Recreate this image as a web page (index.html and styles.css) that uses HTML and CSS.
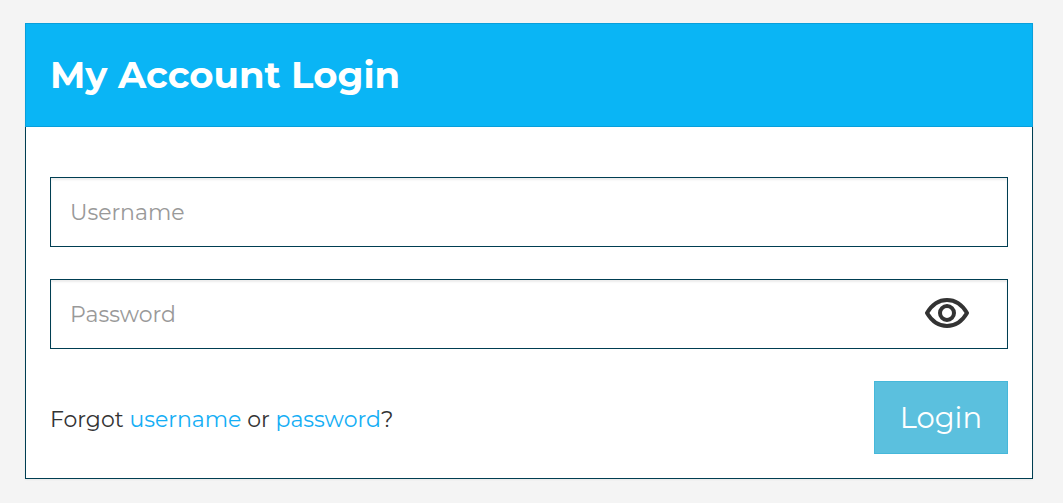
FILE: index.html
```html
<!DOCTYPE html>
<html lang="en">

<head>
    <meta charset="UTF-8">
    <meta name="viewport" content="width=device-width, initial-scale=1.0">
    <title>My Account Login</title>
    <link rel="stylesheet" href="styles.css">
</head>

<body>
    <div class="panel">
        <div class="panel-heading">
            <h1 class="panel-title">My Account Login</h1>
        </div>
        <form class="panel-body">
            <input class="form-control" type="text" id="username" placeholder="Username" aria-label="Username">
            <div class="password-group">
                <input class="form-control" type="password" id="password" placeholder="Password" aria-label="Password">
                <button class="toggle-password" type="button" aria-label="Show password">
                    <svg width="44" height="30" viewBox="0 0 44 30" fill="none" stroke="#333" stroke-width="4">
                        <path d="M2 15C7 6.500 14 2 22 2s15 4.500 20 13c-5 8.500-12 13-20 13S7 23.500 2 15z" stroke-linejoin="round" />
                        <circle cx="22" cy="15" r="7" />
                    </svg>
                </button>
            </div>
            <div class="form-footer">
                <p class="forgot">Forgot <a href="#">username</a> or <a href="#">password</a>?</p>
                <button class="btn-login" type="submit">Login</button>
            </div>
        </form>
    </div>

    <script>
        // Show or hide the password
        document.querySelector('.toggle-password').addEventListener('click', function () {
            const password = document.getElementById('password');
            password.type = password.type === 'password' ? 'text' : 'password';
        });
    </script>
</body>

</html>
```
FILE: styles.css
```css
* {
    box-sizing: border-box;
}

body {
    margin: 0;
    padding: 23px 30px 24px 25px;
    font-family: Montserrat, Inter, sans-serif;
    font-size: 22px;
    line-height: 32px;
    color: #333;
    background-color: #f4f4f4;
}

.panel {
    background-color: #fff;
    border: 1px solid #003e52;
    box-shadow: 0 1px 2px rgba(0, 0, 0, 0.05);
}

.panel-heading {
    margin: -1px -1px 0;
    padding: 27px 24px;
    background-color: #0ab5f5;
    border: 1px solid #089fdb;
}

.panel-title {
    margin: 0;
    font-size: 37px;
    font-weight: 700;
    line-height: 48px;
    color: #fff;
}

.panel-body {
    display: flex;
    flex-direction: column;
    gap: 32px;
    padding: 50px 24px 24px;
}

.form-control {
    display: block;
    width: 100%;
    height: 70px;
    padding: 0 19px;
    font: inherit;
    color: #333;
    background-color: #fff;
    border: 1px solid #003e52;
    border-radius: 0;
    box-shadow: inset 0 2px 2px rgba(0, 0, 0, 0.075);
}

.form-control::placeholder {
    color: #999;
    opacity: 1;
}

.password-group {
    position: relative;
}

.password-group .form-control {
    padding-right: 96px;
}

/* sits over the right end of the password box */
.toggle-password {
    position: absolute;
    top: 0;
    right: 29px;
    display: flex;
    align-items: center;
    height: 100%;
    padding: 0 10px 2px;
    background: none;
    border: none;
    cursor: pointer;
}

.form-footer {
    display: flex;
    justify-content: space-between;
    align-items: center;
}

.forgot {
    margin: 4px 0 0;
}

.forgot a {
    color: #14aef5;
    text-decoration: none;
}

.forgot a:hover {
    text-decoration: underline;
}

.btn-login {
    padding: 15px 25px;
    font-family: inherit;
    font-size: 29px;
    line-height: 41px;
    color: #fff;
    background-color: #5bc0de;
    border: 1px solid #46b8da;
    cursor: pointer;
}

.btn-login:hover {
    background-color: #31b0d5;
}
```
